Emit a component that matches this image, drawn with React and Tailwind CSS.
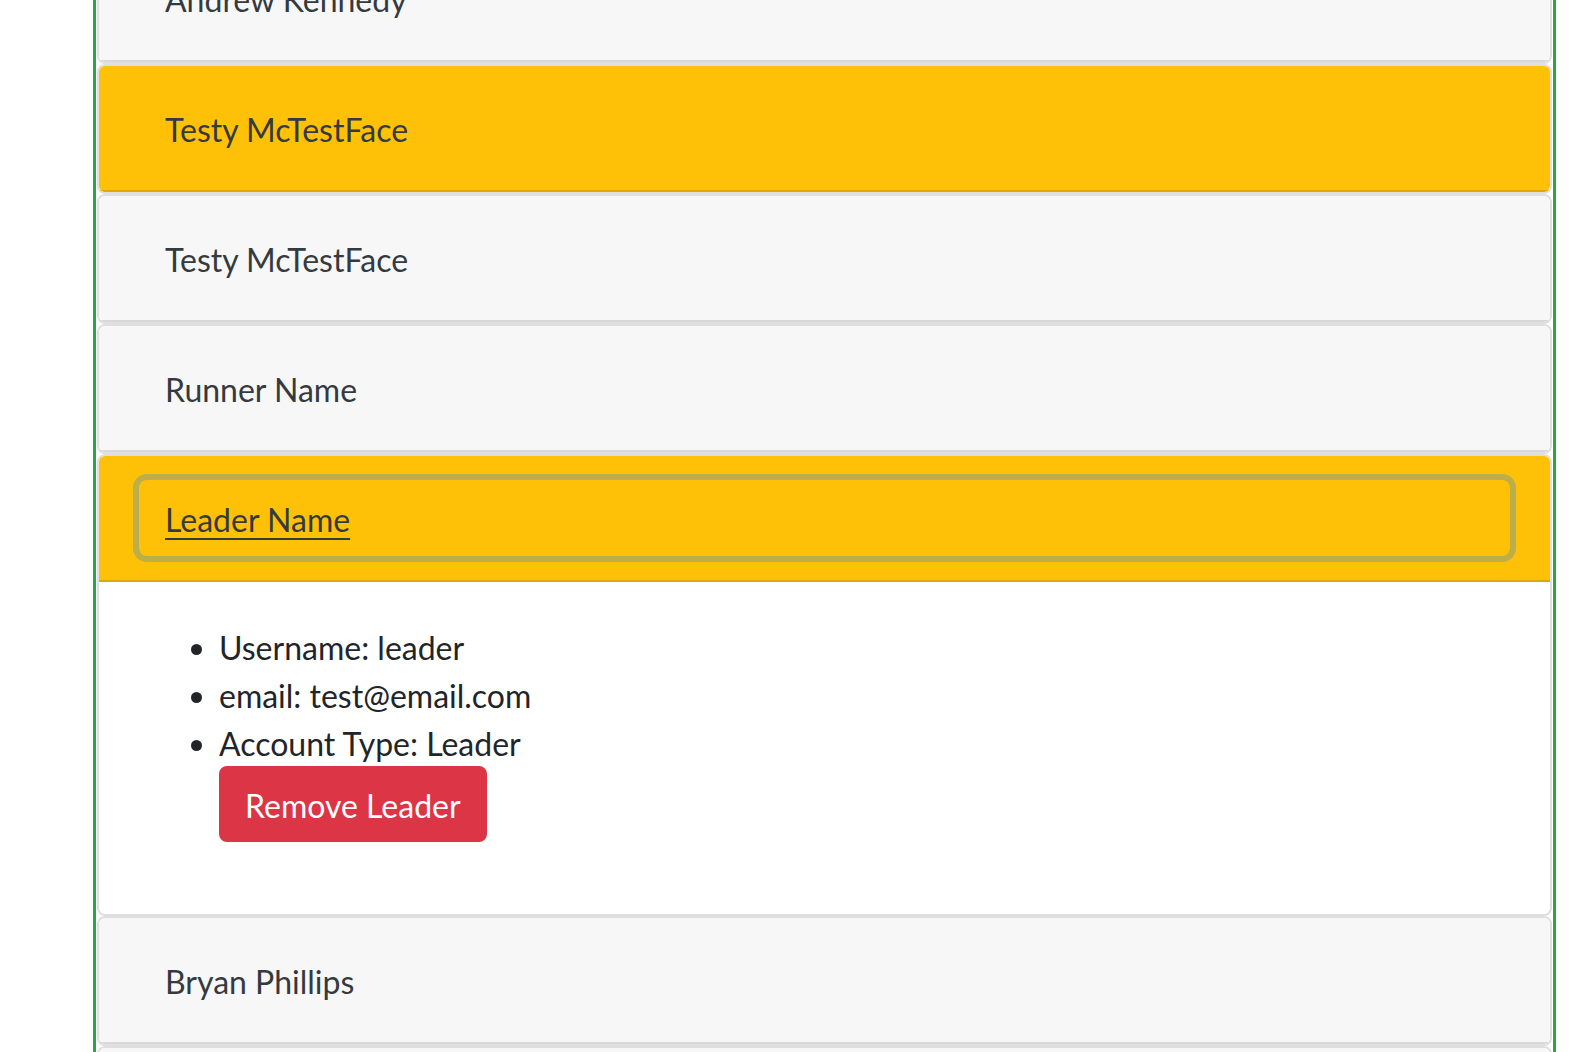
import React from "react";

const runners = [
  { name: "Andrew Kennedy" },
  { name: "Testy McTestFace", warning: true },
  { name: "Testy McTestFace" },
  { name: "Runner Name" },
  {
    name: "Leader Name",
    warning: true,
    open: true,
    focused: true,
    info: ["Username: leader", "email: test@email.com", "Account Type: Leader"],
  },
  { name: "Bryan Phillips" },
  { name: "Another Runner" },
];

function RunnerCard({ runner }) {
  return (
    <div className="border-2 border-[#dfdfdf] rounded-lg overflow-hidden bg-white">
      {/* header */}
      <div
        className={`px-10 py-6 border-b-2 border-[rgba(0,0,0,0.125)] ${
          runner.warning ? "bg-[#ffc107]" : "bg-[#f7f7f7]"
        }`}
      >
        <button
          className={`w-full text-left px-6 pt-[14px] pb-[10px] border-2 border-transparent rounded-lg text-[32px] leading-[48px] text-[#343a40] ${
            runner.focused
              ? "ring-[6px] ring-[#bcae48] underline decoration-2 underline-offset-[6px]"
              : ""
          }`}
        >
          {runner.name}
        </button>
      </div>

      {/* body */}
      {runner.open && (
        <div className="p-10 text-[32px] leading-[48px] text-[#212529]">
          <ul className="list-disc pl-20 pt-[2px] mb-8">
            {runner.info.map((line) => (
              <li key={line}>{line}</li>
            ))}
            <div>
              <button className="bg-[#dc3545] text-white px-6 pt-[14px] pb-[10px] -mt-[2px] border-2 border-[#dc3545] rounded-lg text-[32px] leading-[48px]">
                Remove Leader
              </button>
            </div>
          </ul>
        </div>
      )}
    </div>
  );
}

export default function App() {
  return (
    <div className="h-screen overflow-hidden bg-white font-[Lato,'Open_Sans',sans-serif]">
      <div className="ml-[93px] w-[1463px] min-h-[1200px] -mt-[66px] border-x-[3px] border-[#28a745] px-px">
        {runners.map((r, i) => (
          <RunnerCard key={i} runner={r} />
        ))}
      </div>
    </div>
  );
}
